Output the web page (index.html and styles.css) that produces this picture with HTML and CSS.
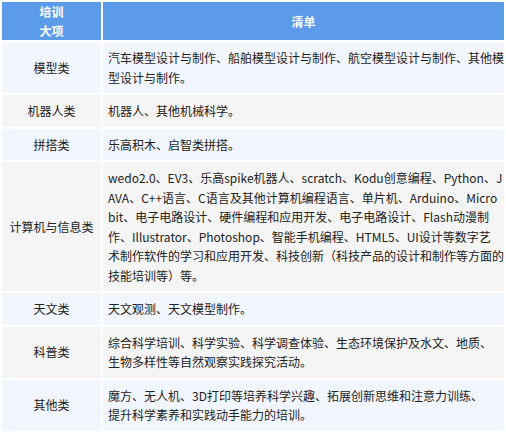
FILE: index.html
```html
<!DOCTYPE html>
<html lang="zh-CN">
<head>
    <meta charset="UTF-8">
    <meta name="viewport" content="width=device-width, initial-scale=1.0">
    <title>培训清单</title>
    <link rel="stylesheet" href="styles.css">
</head>
<body>
    <table class="course-table">
        <thead>
            <tr>
                <th class="col-type">培训<br>大项</th>
                <th>清单</th>
            </tr>
        </thead>
        <tbody>
            <tr class="row-blue">
                <td class="col-type">模型类</td>
                <td>汽车模型设计与制作、船舶模型设计与制作、航空模型设计与制作、其他模型设计与制作。</td>
            </tr>
            <tr class="row-gray">
                <td class="col-type">机器人类</td>
                <td>机器人、其他机械科学。</td>
            </tr>
            <tr class="row-blue">
                <td class="col-type">拼搭类</td>
                <td>乐高积木、启智类拼搭。</td>
            </tr>
            <tr class="row-gray">
                <td class="col-type">计算机与信息类</td>
                <td>wedo2.0、EV3、乐高spike机器人、scratch、Kodu创意编程、Python、JAVA、C++语言、C语言及其他计算机编程语言、单片机、Arduino、Micro bit、电子电路设计、硬件编程和应用开发、电子电路设计、Flash动漫制作、Illustrator、Photoshop、智能手机编程、HTML5、UI设计等数字艺<br>术制作软件的学习和应用开发、科技创新（科技产品的设计和制作等方面的技能培训等）等。</td>
            </tr>
            <tr class="row-blue">
                <td class="col-type">天文类</td>
                <td>天文观测、天文模型制作。</td>
            </tr>
            <tr class="row-gray">
                <td class="col-type">科普类</td>
                <td>综合科学培训、科学实验、科学调查体验、生态环境保护及水文、地质、<br>生物多样性等自然观察实践探究活动。</td>
            </tr>
            <tr class="row-blue">
                <td class="col-type">其他类</td>
                <td>魔方、无人机、3D打印等培养科学兴趣、拓展创新思维和注意力训练、<br>提升科学素养和实践动手能力的培训。</td>
            </tr>
        </tbody>
    </table>
</body>
</html>
```

FILE: styles.css
```css
body {
    margin: 0;
    font-family: "Noto Sans CJK SC", "Liberation Sans", sans-serif;
    font-size: 12px;
    color: #222;
    background: #fff;
}
.course-table {
    width: 100%;
    border-collapse: collapse;
    table-layout: fixed;
}
.course-table th,
.course-table td {
    border: 2px solid #fff;
    vertical-align: middle;
}
.course-table th {
    background: #5b9bea;
    color: #fff;
    font-weight: bold;
    text-align: center;
    line-height: 19px;
    padding: 0 5px;
}
.course-table td {
    line-height: 19.5px;
    padding: 6px 0 6px 5px;
    text-align: left;
    word-break: break-all;
}
.course-table .col-type {
    width: 101px;
    box-sizing: border-box;
    text-align: center;
    padding-right: 5px;
}
.row-blue td {
    background: #f2f6fe;
}
.row-gray td {
    background: #f5f5f5;
}
```
